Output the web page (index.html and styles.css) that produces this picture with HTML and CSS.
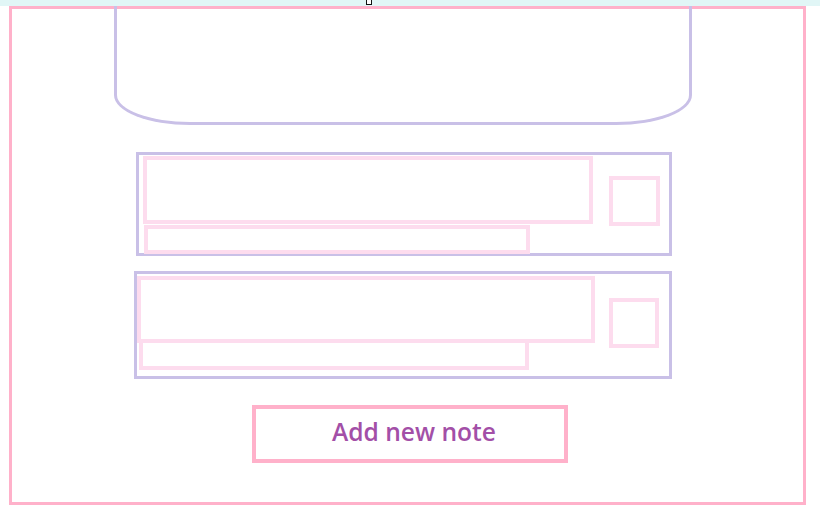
FILE: index.html
```html
<!DOCTYPE html>
<html>
<head>
<meta charset="utf-8">
<link rel="stylesheet" href="styles.css">
</head>
<body>
<div class="topbar"><span class="caret"></span></div>
<div class="frame">
  <div class="header-shape"></div>
  <div class="card card-one">
    <div class="fields">
      <div class="field-title"></div>
      <div class="field-sub"></div>
    </div>
    <div class="check"></div>
  </div>
  <div class="card card-two">
    <div class="fields">
      <div class="field-title"></div>
      <div class="field-sub"></div>
    </div>
    <div class="check"></div>
  </div>
  <button class="add-btn">Add new note</button>
</div>
</body>
</html>
```
FILE: styles.css
```css
* { box-sizing: border-box; }
html, body { margin: 0; padding: 0; background: #ffffff; }
body { font-family: "Open Sans", "Noto Sans", sans-serif; }

.topbar {
  height: 6px;
  background: #e1f6f6;
  position: relative;
}
.caret {
  position: absolute;
  left: 366px;
  top: -2px;
  width: 6px;
  height: 7px;
  border: 1px solid #111;
  background: #fff;
}

.frame {
  margin-left: 9px;
  width: 797px;
  height: 499px;
  border: 3px solid #ffb1ca;
  display: flex;
  flex-direction: column;
  align-items: flex-start;
}

.header-shape {
  margin-top: -3px;
  margin-left: 102px;
  width: 578px;
  height: 119px;
  border: 3px solid #c9c0e7;
  border-top: none;
  border-radius: 0 0 76px 76px / 0 0 30px 30px;
}

.card {
  border: 3px solid #c9c0e7;
  display: flex;
  align-items: center;
}
.card-one {
  margin-top: 27px;
  margin-left: 124px;
  width: 536px;
  height: 104px;
}
.card-two {
  margin-top: 15px;
  margin-left: 122px;
  width: 538px;
  height: 108px;
}

.fields {
  align-self: flex-start;
  display: flex;
  flex-direction: column;
  align-items: flex-start;
}
.field-title {
  border: 4px solid #fddcee;
}
.field-sub {
  border: 4px solid #fddcee;
}
.check {
  border: 4px solid #fddcee;
}

.card-one .field-title { margin: 1px 0 0 4px; width: 450px; height: 68px; }
.card-one .field-sub { margin: 1px 0 0 5px; width: 386px; height: 29px; }
.card-one .check { margin-left: 16px; width: 51px; height: 50px; margin-top: -6px; }

.card-two .field-title { margin: 2px 0 0 0; width: 458px; height: 67px; }
.card-two .field-sub { margin: -4px 0 0 2px; width: 390px; height: 31px; }
.card-two .check { margin-left: 14px; width: 50px; height: 50px; margin-top: -4px; }

.add-btn {
  margin-top: 26px;
  margin-left: 240px;
  width: 316px;
  height: 58px;
  border: 4px solid #ffb1ca;
  background: #fff;
  color: #a34fa7;
  font-family: "Open Sans", "Noto Sans", sans-serif;
  font-weight: 600;
  font-size: 24.6px;
  padding: 0 0 5px 8px;
}
```
